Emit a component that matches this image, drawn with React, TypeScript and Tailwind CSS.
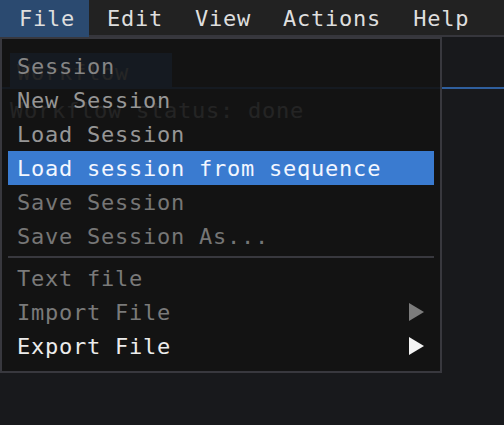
import React from 'react';

type Item = {
  label: string;
  color: string;
  active?: boolean;
  submenu?: boolean;
};

const topItems: Item[] = [
  { label: 'Session', color: 'text-[#858585]' },
  { label: 'New Session', color: 'text-[#969696]' },
  { label: 'Load Session', color: 'text-[#969696]' },
  { label: 'Load session from sequence', color: 'text-[#f2f6ff]', active: true },
  { label: 'Save Session', color: 'text-[#767676]' },
  { label: 'Save Session As...', color: 'text-[#767676]' },
];

const bottomItems: Item[] = [
  { label: 'Text file', color: 'text-[#7a7a7a]' },
  { label: 'Import File', color: 'text-[#7a7a7a]', submenu: true },
  { label: 'Export File', color: 'text-[#ececec]', submenu: true },
];

const menus = ['File', 'Edit', 'View', 'Actions', 'Help'];

function Arrow({ fill }: { fill: string }) {
  return (
    <svg width="15" height="18" viewBox="0 0 15 18">
      <polygon points="0,0 15,9 0,18" fill={fill} />
    </svg>
  );
}

function MenuRow({ item }: { item: Item }) {
  return (
    <div
      className={`mx-[6px] flex h-[34px] items-center justify-between pl-[9px] pr-[10px] ${
        item.active ? 'bg-[#3a7bd0]' : ''
      }`}
    >
      <span className={`whitespace-pre pt-[2px] ${item.color}`}>{item.label}</span>
      {item.submenu && (
        <Arrow fill={item.color.includes('ececec') ? '#f4f4f4' : '#7c7c7c'} />
      )}
    </div>
  );
}

export default function App() {
  return (
    <div
      className="relative h-[425px] w-[504px] overflow-hidden bg-[#18191c] text-[22px] leading-[22px] tracking-[0.76px]"
      style={{ fontFamily: '"DejaVu Sans Mono", "Liberation Mono", monospace' }}
    >
      {/* menu bar */}
      <div className="flex h-[37px] gap-[4px] bg-[#222222] shadow-[inset_0_-2px_0_#36363c]">
        {menus.map((m, i) => (
          <div
            key={m}
            className={`pt-[8px] text-[#dedede] ${
              i === 0 ? 'bg-[#2b4a70] pl-[19px] pr-[14px]' : 'px-[14px]'
            }`}
          >
            {m}
          </div>
        ))}
      </div>

      {/* window content behind the popup */}
      <div className="pt-[16px]">
        <div className="flex h-[36px] border-b-2 border-[#2f5f9e] pl-[10px]">
          <div className="flex w-[162px] items-center bg-[#2f5f9e] pl-[7px] pt-[6px] text-[#d0d0d0]">
            Workflow
          </div>
        </div>
        <div className="mt-[11px] pl-[10px] text-[#c4c4c4]">Workflow status: done</div>
      </div>

      {/* File popup */}
      <div className="absolute left-0 top-[37px] w-[442px] border-2 border-[#38383e] bg-[#131313]/90 pb-[8px] pt-[10px]">
        {topItems.map((it) => (
          <MenuRow key={it.label} item={it} />
        ))}
        <div className="mx-[6px] my-[3px] h-[2px] bg-[#38383e]" />
        {bottomItems.map((it) => (
          <MenuRow key={it.label} item={it} />
        ))}
      </div>
    </div>
  );
}
